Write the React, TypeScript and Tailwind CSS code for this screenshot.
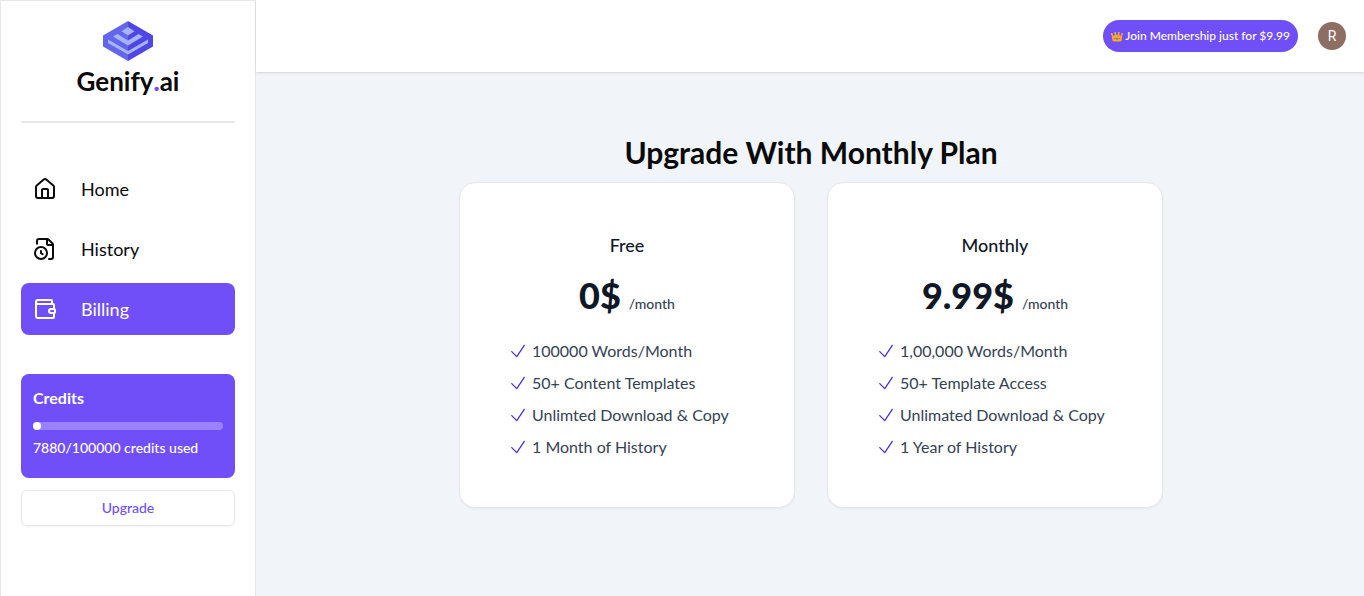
import { FileClock, House, Wallet } from "lucide-react";

const navItems = [
  { label: "Home", icon: House, active: false },
  { label: "History", icon: FileClock, active: false },
  { label: "Billing", icon: Wallet, active: true },
];

const plans = [
  {
    name: "Free",
    price: "0$",
    features: ["100000 Words/Month", "50+ Content Templates", "Unlimted Download & Copy", "1 Month of History"],
  },
  {
    name: "Monthly",
    price: "9.99$",
    features: ["1,00,000 Words/Month", "50+ Template Access", "Unlimated Download & Copy", "1 Year of History"],
  },
];

function Logo() {
  return (
    <a href="#" className="flex flex-col items-center">
      <svg viewBox="0 0 50 40" className="h-10 w-[50px]" aria-hidden="true">
        <path d="M25 0 0 14.500v11L25 40Z" fill="#6366eb" />
        <path d="M25 0 50 14.500v11L25 40Z" fill="#4f46e5" />
        <path d="M25 6 31.500 10.300 25 14.500 18.500 10.300Z" fill="#a5b4fc" />
        <path d="M14.500 13 25 19.500 35.500 13 40 15.500 25 24.500 10 15.500Z" fill="#a5b4fc" />
        <path d="M5 18.500 25 30 45 18.500v3.500L25 33.500 5 22Z" fill="#a5b4fc" />
      </svg>
      <span className="mt-1 text-[26px] leading-8 font-bold text-neutral-950">
        Genify<span className="font-black text-[#704ff8]">.</span>ai
      </span>
    </a>
  );
}

function Crown() {
  return (
    <svg viewBox="0 0 24 22" className="h-[11px] w-3 shrink-0" aria-hidden="true">
      <path d="M1 6 6 10 8.500 4l3.500 5 3.500-5L18 10l5-4-2 14q-9 2-18 0Z" fill="#ffa726" />
      <circle cx="1.800" cy="6" r="1.800" fill="#ffb636" />
      <circle cx="8.500" cy="4" r="1.800" fill="#ffb636" />
      <circle cx="15.500" cy="4" r="1.800" fill="#ffb636" />
      <circle cx="22.200" cy="6" r="1.800" fill="#ffb636" />
      <circle cx="12" cy="15.500" r="2.200" fill="#26a69a" />
      <circle cx="7" cy="15" r="1.500" fill="#e4586e" />
      <circle cx="17" cy="15" r="1.500" fill="#e4586e" />
    </svg>
  );
}

function Sidebar() {
  return (
    <aside className="w-64 shrink-0 border border-b-0 border-gray-200 bg-white p-5">
      <Logo />
      <hr className="mt-6 border-t-2 border-gray-200" />
      <nav className="mt-10 flex flex-col gap-2">
        {navItems.map(({ label, icon: Icon, active }) => (
          <a
            key={label}
            href="#"
            aria-current={active ? "page" : undefined}
            className={
              active
                ? "flex items-center gap-6 rounded-lg bg-[#704ff8] p-3 text-lg text-white"
                : "flex items-center gap-6 rounded-lg p-3 text-lg text-neutral-950"
            }
          >
            <Icon className="size-6" />
            {label}
          </a>
        ))}
      </nav>
      <section className="mt-[39px] rounded-lg bg-[#704ff8] px-3 pt-3 pb-5 text-white">
        <h2 className="font-bold">Credits</h2>
        <div
          role="progressbar"
          aria-label="Credits used"
          aria-valuenow={7880}
          aria-valuemax={100000}
          className="mt-3 h-2 rounded-full bg-[#9b82fb]"
        >
          <div className="size-2 rounded-full bg-white" />
        </div>
        <p className="mt-2 text-sm font-medium">7880/100000 credits used</p>
      </section>
      <button
        type="button"
        className="mt-3 h-9 w-full rounded-md border border-gray-200 bg-white text-sm font-medium text-[#704ff8] shadow-xs"
      >
        Upgrade
      </button>
    </aside>
  );
}

function PlanCard({ name, price, features }: (typeof plans)[number]) {
  return (
    <article className="rounded-2xl border border-gray-200 bg-white p-12 shadow-xs">
      <div className="text-center">
        <h2 className="text-lg font-medium text-gray-900">{name}</h2>
        <p className="mt-4 flex items-baseline justify-center gap-2">
          <strong className="text-4xl font-black text-gray-900">{price}</strong>
          <span className="text-sm font-medium text-gray-700">/month</span>
        </p>
      </div>
      <ul className="mt-6 flex flex-col gap-2">
        {features.map((feature) => (
          <li key={feature} className="flex items-center gap-1 whitespace-nowrap text-gray-700">
            <svg
              viewBox="0 0 24 24"
              fill="none"
              stroke="currentColor"
              strokeWidth="1.5"
              strokeLinecap="round"
              strokeLinejoin="round"
              className="size-5 shrink-0 text-indigo-700"
              aria-hidden="true"
            >
              <path d="M4.500 12.750l6 6 9-13.500" />
            </svg>
            {feature}
          </li>
        ))}
      </ul>
    </article>
  );
}

export default function App() {
  return (
    <div className="flex min-h-screen bg-slate-100 font-['Lato','Liberation_Sans',sans-serif]">
      <Sidebar />
      <div className="flex min-w-0 flex-1 flex-col">
        <header className="flex items-center justify-end gap-5 bg-white py-5 pr-[18px] pl-5 shadow-sm">
          <button
            type="button"
            className="flex h-8 items-center gap-0.5 rounded-full bg-[#704ff8] px-2 text-xs font-medium text-white"
          >
            <Crown />
            Join Membership just for $9.99
          </button>
          <button
            type="button"
            aria-label="Account"
            className="size-7 rounded-full bg-[#8d6e63] font-['Roboto',sans-serif] text-sm text-white"
          >
            R
          </button>
        </header>
        <div className="pl-0.5">
          <main className="mx-auto w-full max-w-3xl px-8 pt-[62px] pb-12">
            <h1 className="text-center text-3xl font-bold text-neutral-950">Upgrade With Monthly Plan</h1>
            <div className="mt-3 grid grid-cols-2 gap-8">
              {plans.map((plan) => (
                <PlanCard key={plan.name} {...plan} />
              ))}
            </div>
          </main>
        </div>
      </div>
    </div>
  );
}
